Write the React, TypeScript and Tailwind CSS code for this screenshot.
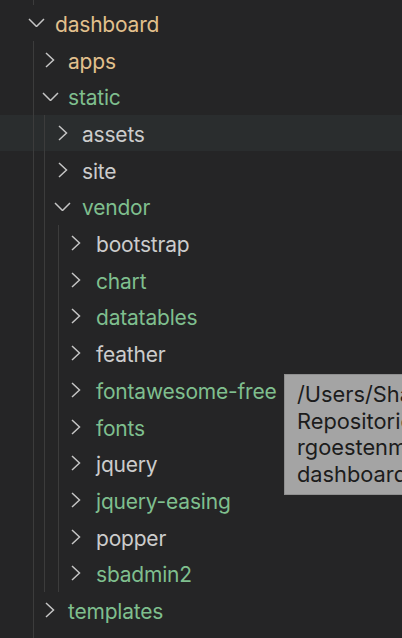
import React from 'react'

type Tone = 'tan' | 'green' | 'plain'

type Row = {
  name: string
  level: 0 | 1 | 2 | 3
  open?: boolean
  tone: Tone
  hover?: boolean
}

const rows: Row[] = [
  { name: 'dashboard', level: 0, open: true, tone: 'tan' },
  { name: 'apps', level: 1, tone: 'tan' },
  { name: 'static', level: 1, open: true, tone: 'green' },
  { name: 'assets', level: 2, tone: 'plain', hover: true },
  { name: 'site', level: 2, tone: 'plain' },
  { name: 'vendor', level: 2, open: true, tone: 'green' },
  { name: 'bootstrap', level: 3, tone: 'plain' },
  { name: 'chart', level: 3, tone: 'green' },
  { name: 'datatables', level: 3, tone: 'green' },
  { name: 'feather', level: 3, tone: 'plain' },
  { name: 'fontawesome-free', level: 3, tone: 'green' },
  { name: 'fonts', level: 3, tone: 'green' },
  { name: 'jquery', level: 3, tone: 'plain' },
  { name: 'jquery-easing', level: 3, tone: 'green' },
  { name: 'popper', level: 3, tone: 'plain' },
  { name: 'sbadmin2', level: 3, tone: 'green' },
  { name: 'templates', level: 1, tone: 'green' },
]

const toneClass: Record<Tone, string> = {
  tan: 'text-[#e2c08d]',
  green: 'text-[#7fbf8e]',
  plain: 'text-[#cccccc]',
}

// left padding so the twistie lands under its parent's label
const padClass = ['pl-[23px]', 'pl-[37px]', 'pl-[49.5px]', 'pl-[63px]']
const labelClass = ['ml-[6px]', 'ml-[5px]', 'ml-[6.5px]', 'ml-[7px]']
const guideClass = ['left-[33px]', 'left-[44px]', 'left-[58px]']

function Chevron({ open }: { open?: boolean }) {
  if (open) {
    return (
      <svg width="17" height="9" viewBox="0 0 17 9" fill="none">
        <path d="M1 1l7.5 7.5L16 1" stroke="#c5c5c5" strokeWidth="1.5" />
      </svg>
    )
  }
  return (
    <svg width="10" height="16" viewBox="0 0 10 16" fill="none">
      <path d="M1 1l7.5 7L1 15" stroke="#c5c5c5" strokeWidth="1.5" />
    </svg>
  )
}

function Guides({ level }: { level: number }) {
  return (
    <>
      {guideClass.slice(0, level).map((g) => (
        <span key={g} className={`absolute top-0 bottom-0 w-px bg-[#3c3c3c] ${g}`} />
      ))}
    </>
  )
}

export default function App() {
  return (
    <div
      className="relative w-[402px] h-[638px] overflow-hidden bg-[#252526]"
      style={{ fontFamily: 'Inter, "Noto Sans", sans-serif' }}
    >
      {/* tail of the row above */}
      <div className="relative h-[4.65px]">
        <Guides level={1} />
      </div>

      {rows.map((row) => (
        <div
          key={row.name}
          className={`relative flex items-center h-[36.7px] ${padClass[row.level]} ${row.hover ? 'bg-[#2a2d2e]' : ''}`}
        >
          <Guides level={row.level} />
          <div className="w-[26px] flex justify-center items-center">
            <Chevron open={row.open} />
          </div>
          <span className={`pt-[3px] text-[21px] leading-none tracking-[-0.2px] whitespace-nowrap ${labelClass[row.level]} ${toneClass[row.tone]}`}>
            {row.name}
          </span>
        </div>
      ))}

      {/* next row, cut off */}
      <div className="relative h-[40px]">
        <Guides level={1} />
      </div>

      {/* path tooltip, runs past the right edge */}
      <div className="absolute left-[284px] top-[374px] w-[260px] h-[121px] bg-[#a4a4a4] border border-[#8f8f8f] pl-[12px] py-[6px] text-[21.8px] leading-[26.7px] text-[#1c1c1c] whitespace-nowrap">
        <div>/Users/Shawn/</div>
        <div>Repositories/</div>
        <div>rgoestenmeier/</div>
        <div>dashboard/static/vendor/fontawesome-free</div>
      </div>
    </div>
  )
}
